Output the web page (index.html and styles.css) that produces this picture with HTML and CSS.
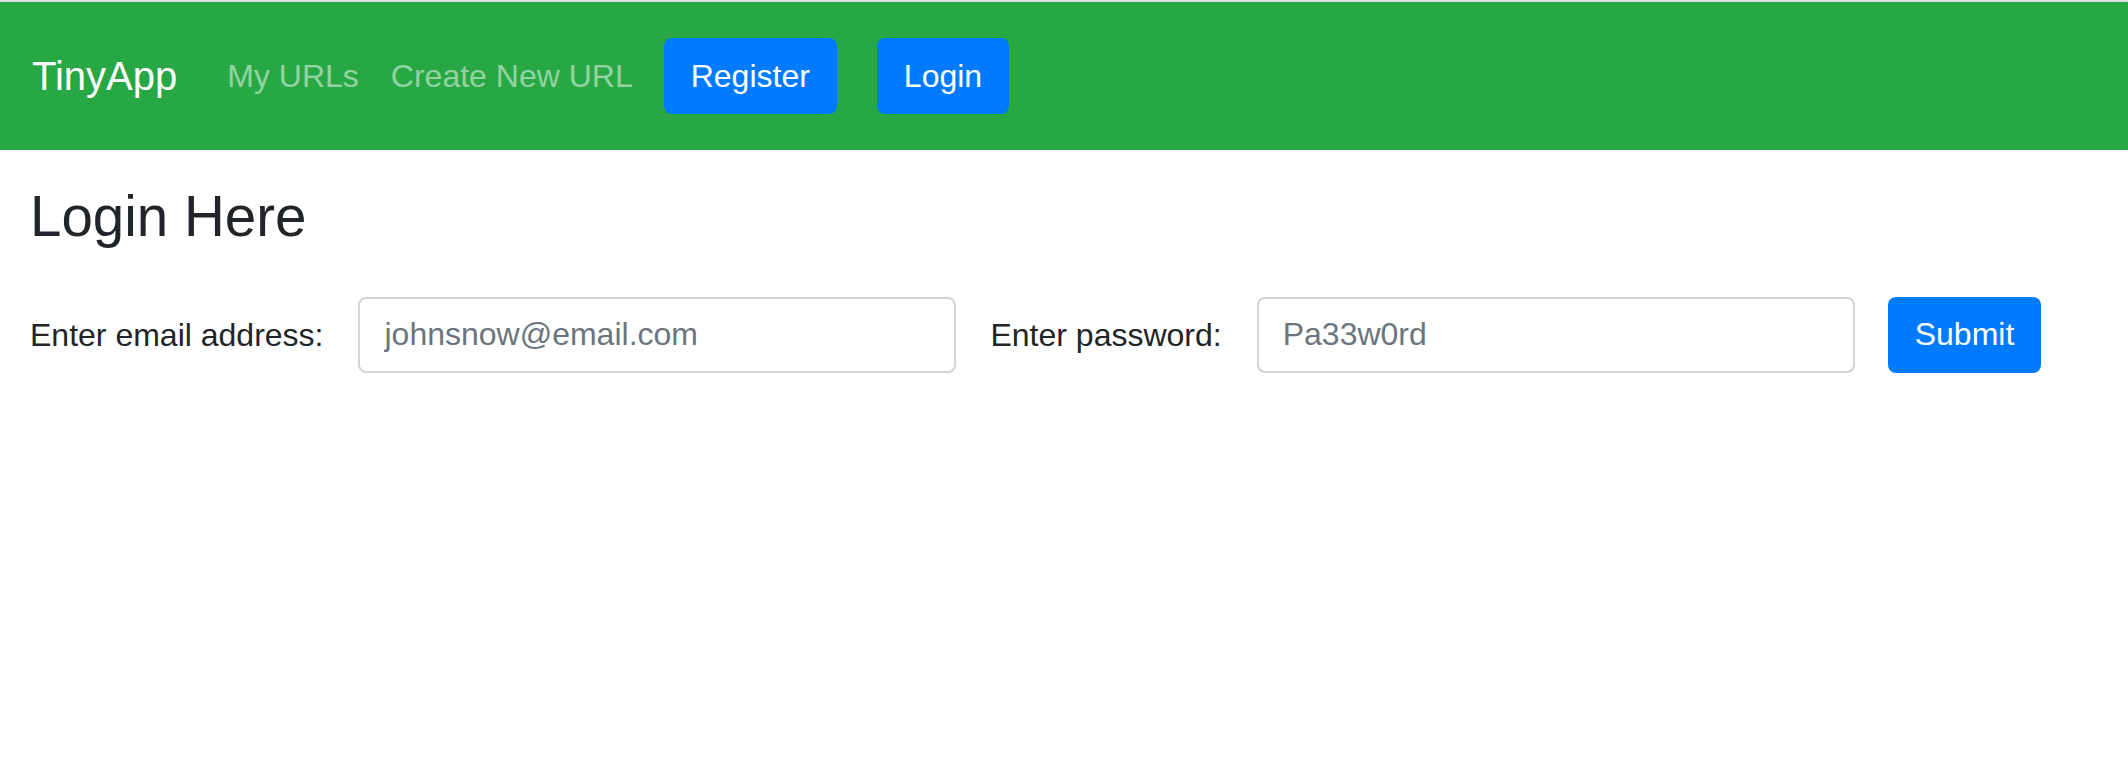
FILE: index.html
```html
<!DOCTYPE html>
<html lang="en">
<head>
<meta charset="utf-8">
<title>TinyApp - Login</title>
<link rel="stylesheet" href="styles.css">
</head>
<body>
<div class="topline"></div>
<nav class="navbar">
  <a class="brand" href="#">TinyApp</a>
  <div class="nav-links">
    <a class="nav-link" href="#">My URLs</a>
    <a class="nav-link" href="#">Create New URL</a>
  </div>
  <div class="nav-buttons">
    <button class="btn" type="button">Register</button>
    <button class="btn" type="button">Login</button>
  </div>
</nav>
<main class="content">
  <h1 class="title">Login Here</h1>
  <form class="login-form">
    <label class="label" for="email">Enter email address:</label>
    <input class="input" id="email" type="text" placeholder="johnsnow@email.com">
    <label class="label" for="password">Enter password:</label>
    <input class="input" id="password" type="text" placeholder="Pa33w0rd">
    <button class="btn submit" type="button">Submit</button>
  </form>
</main>
</body>
</html>
```

FILE: styles.css
```css
html, body {
  margin: 0;
  padding: 0;
  background: #ffffff;
}

body {
  font-family: "Liberation Sans", Arial, sans-serif;
  color: #212529;
}

.topline {
  height: 2px;
  background: #dedede;
}

.navbar {
  height: 148px;
  background: #28a745;
  display: flex;
  align-items: center;
  padding: 0 32px;
  box-sizing: border-box;
}

.brand {
  font-size: 40px;
  line-height: 1.2;
  color: #ffffff;
  text-decoration: none;
  margin-right: 34px;
}

.nav-links {
  display: flex;
  align-items: center;
}

.nav-link {
  font-size: 32px;
  line-height: 1.5;
  color: rgba(255, 255, 255, 0.5);
  text-decoration: none;
  padding: 0 16px;
}

.nav-buttons {
  display: flex;
  align-items: center;
  gap: 40px;
  margin-left: 15px;
}

.btn {
  font-family: "Liberation Sans", Arial, sans-serif;
  font-size: 32px;
  height: 76px;
  padding: 0 27px;
  border: none;
  border-radius: 8px;
  background: #007bff;
  color: #ffffff;
  cursor: pointer;
}

.content {
  padding: 0 30px;
}

.title {
  font-size: 56.5px;
  font-weight: 400;
  line-height: 1.2;
  margin: 33px 0 46px 0;
}

.login-form {
  display: flex;
  align-items: center;
}

.label {
  font-size: 32px;
  line-height: 1.5;
  margin-right: 35px;
}

.input {
  font-family: "Liberation Sans", Arial, sans-serif;
  font-size: 32px;
  width: 598px;
  height: 76px;
  box-sizing: border-box;
  padding: 0 24px;
  border: 2px solid #ced4da;
  border-radius: 8px;
  color: #495057;
  margin-right: 34px;
  outline: none;
}

.input::placeholder {
  color: #6c757d;
  opacity: 1;
}

.submit {
  margin-left: -1px;
  padding: 0 27px;
}
```
